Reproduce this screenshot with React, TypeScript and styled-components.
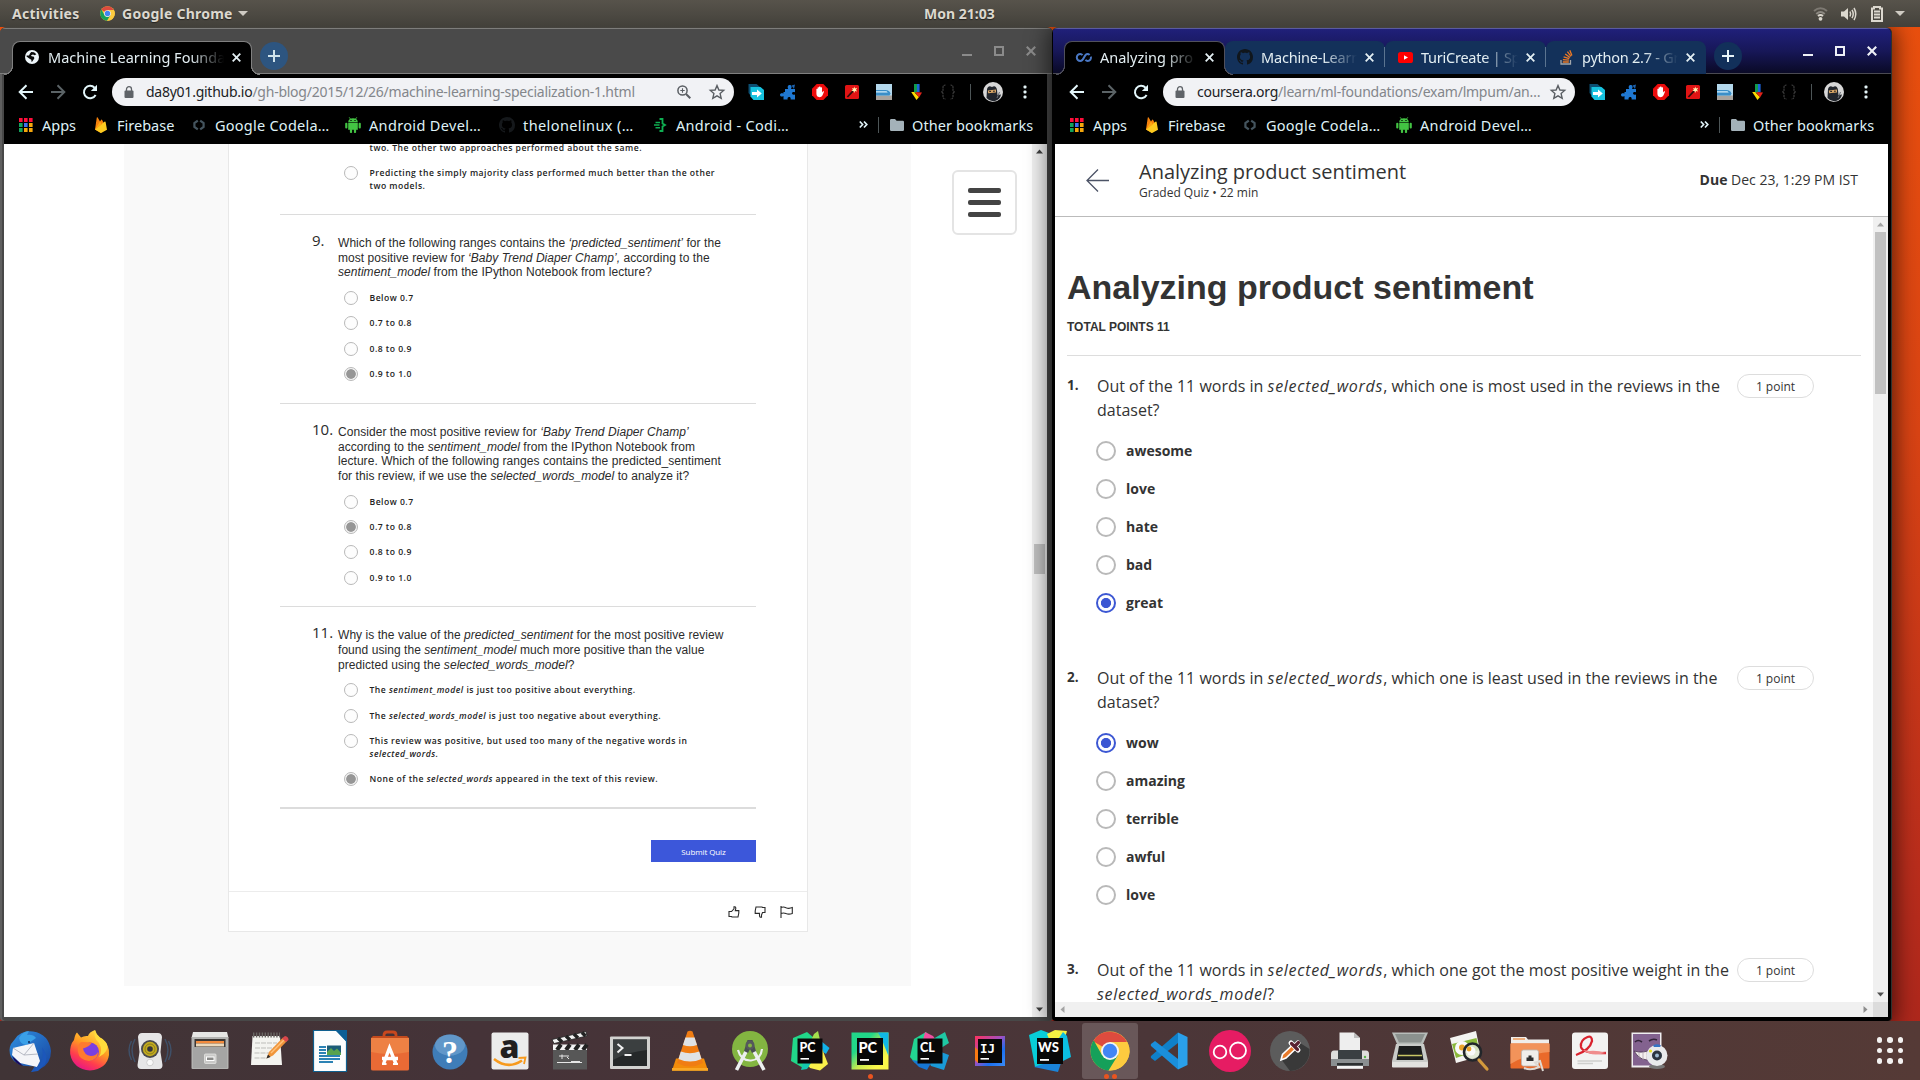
import React from 'react';
import styled, { createGlobalStyle, css } from 'styled-components';

const UI = `"Noto Sans", "Open Sans", sans-serif`;
const OPEN = `"Open Sans", "Noto Sans", sans-serif`;
const ARIAL = `"Liberation Sans", Arial, sans-serif`;

const GlobalStyle = createGlobalStyle`
  *, *::before, *::after { box-sizing: border-box; }
  html, body { margin: 0; padding: 0; }
  body { width: 1920px; height: 1080px; overflow: hidden; background: #000; }
  svg { display: block; flex: none; overflow: visible; }
`;

/* ---------- desktop shell ---------- */

const Desktop = styled.div`
  width: 1920px;
  height: 1080px;
  display: flex;
  flex-direction: column;
  overflow: hidden;
  background: linear-gradient(180deg, #ea500e 0%, #d84314 40%, #b92d1c 80%, #a9251c 100%);
`;

const TopBar = styled.header`
  height: 27px;
  flex: none;
  display: grid;
  grid-template-columns: 1fr auto 1fr;
  align-items: center;
  padding: 0 15px 0 12px;
  background: linear-gradient(180deg, #57534b 0%, #4c4942 55%, #42403a 100%);
  color: #dcd8cf;
  font: 700 14px/27px ${UI};
  position: relative;
  z-index: 3;
`;

const BarSide = styled.div<{ $end?: boolean }>`
  display: flex;
  align-items: center;
  height: 27px;
  justify-content: ${p => (p.$end ? 'flex-end' : 'flex-start')};
`;

const BarText = styled.span<{ $w: number; $ls?: number }>`
  width: ${p => p.$w}px;
  letter-spacing: ${p => p.$ls ?? 0}px;
  white-space: nowrap;
  text-shadow: 0 1px 1px rgba(0, 0, 0, 0.5);
`;

const Gap = styled.span<{ $w: number }>`
  width: ${p => p.$w}px;
  flex: none;
`;

const Workspace = styled.main`
  height: 994px;
  flex: none;
  display: flex;
`;

const Window = styled.section<{ $focused?: boolean }>`
  position: relative;
  z-index: ${p => (p.$focused ? 2 : 1)};
  display: flex;
  flex-direction: column;
  height: 994px;
  border-top: 1px solid #45433e;
  border-radius: 6px 6px 4px 4px;
  overflow: hidden;
  ${p =>
    p.$focused
      ? css`
          width: 840px;
          margin-left: -1px;
          padding: 0 3px 3px 3px;
          background: #000;
          border-right: 1px solid #2b3230;
          box-shadow: 0 2px 22px 3px rgba(0, 0, 0, 0.6);
        `
      : css`
          width: 1053px;
          padding: 0 6px 4px 4px;
          background: #484848;
          box-shadow: inset 2px 0 0 #5f5f5f, inset -1px 0 0 #555;
        `}
`;

const TabStrip = styled.div<{ $focused?: boolean }>`
  height: 46px;
  flex: none;
  display: flex;
  padding-top: 12px;
  margin: 0 ${p => (p.$focused ? '-3px 0 -2px' : '-6px 0 -4px')};
  padding-left: ${p => (p.$focused ? 11 : 12)}px;
  border-top: 1px solid ${p => (p.$focused ? '#5a5aa0' : '#7d7d7b')};
  border-bottom: 1px solid ${p => (p.$focused ? '#4a4a52' : '#808080')};
  background: ${p => (p.$focused ? 'linear-gradient(180deg, #20207a 0%, #171758 50%, #0a0a26 100%)' : '#4a4a4a')};
`;

const Tab = styled.div<{ $w: number; $active?: boolean; $line: string; $divider?: boolean }>`
  position: relative;
  width: ${p => p.$w}px;
  height: ${p => (p.$active ? 34 : 33)}px;
  flex: none;
  display: flex;
  align-items: center;
  padding: 0 7px 1px 11px;
  border-radius: 8px 8px 0 0;
  background: ${p => (p.$active ? '#000' : '#13315a')};
  color: #e3eef2;
  z-index: ${p => (p.$active ? 2 : 1)};
  ${p =>
    p.$active &&
    css`
      border: 1px solid ${p.$line};
      border-bottom: none;
      padding: 0 6px 3px 10px;
      &::before,
      &::after {
        content: '';
        position: absolute;
        bottom: 0;
        width: 9px;
        height: 9px;
      }
      &::before {
        left: -9px;
        background: radial-gradient(circle at 0 0, transparent 7.6px, ${p.$line} 8px 8.8px, #000 9.2px);
      }
      &::after {
        right: -9px;
        background: radial-gradient(circle at 100% 0, transparent 7.6px, ${p.$line} 8px 8.8px, #000 9.2px);
      }
    `}
  ${p =>
    p.$divider &&
    css`
      &::after {
        content: '';
        position: absolute;
        right: 0;
        top: 6px;
        width: 1px;
        height: 20px;
        background: #5b7490;
      }
    `}
`;

const TabTitle = styled.span<{ $ls?: number }>`
  flex: 1;
  min-width: 0;
  margin: 0 3px 0 7px;
  overflow: hidden;
  white-space: nowrap;
  font: 400 14.5px/22px ${UI};
  letter-spacing: ${p => p.$ls ?? 0}px;
  mask-image: linear-gradient(90deg, #000 calc(100% - 34px), transparent 100%);
`;

const IconSlot = styled.span<{ $w?: number }>`
  width: ${p => p.$w ?? 18}px;
  flex: none;
  display: flex;
  align-items: center;
  justify-content: center;
`;

const NewTab = styled.div<{ $color: string }>`
  width: 28px;
  height: 28px;
  margin: 1px 0 0 8px;
  border-radius: 50%;
  display: flex;
  align-items: center;
  justify-content: center;
  background: ${p => p.$color};
`;

const Controls = styled.div<{ $color: string }>`
  margin: -1px 0 0 auto;
  height: 22px;
  display: flex;
  align-items: center;
  gap: 22px;
  padding-right: ${p => (p.$color === '#8b8b8b' ? 17 : 14)}px;
  color: ${p => p.$color};
`;

const Toolbar = styled.div`
  height: 36px;
  flex: none;
  display: flex;
  align-items: center;
  padding: 0 6px;
  background: #000;
  color: #e3f3f6;
`;

const Omnibox = styled.div`
  flex: 1;
  min-width: 0;
  height: 28px;
  margin: 0 6px;
  display: flex;
  align-items: center;
  border-radius: 14px;
  background: #f1f2f5;
  color: #5f6368;
`;

const Url = styled.span<{ $ls: number }>`
  flex: 1;
  min-width: 0;
  white-space: nowrap;
  font: 400 14px/26px ${UI};
  letter-spacing: ${p => p.$ls}px;
  color: #83868b;
  b {
    font-weight: 400;
    color: #202124;
  }
`;

const VLine = styled.span<{ $h: number }>`
  width: 1px;
  height: ${p => p.$h}px;
  background: #4d5557;
  flex: none;
`;

const BookmarkBar = styled.div`
  height: 34px;
  flex: none;
  display: flex;
  align-items: center;
  padding: 0 0 5px 14px;
  background: #000;
  color: #dff1f6;
  font: 400 14.5px/22px ${UI};
`;

const Bookmark = styled.div<{ $w: number; $ls?: number }>`
  width: ${p => p.$w}px;
  flex: none;
  display: flex;
  align-items: center;
  gap: 8px;
  white-space: nowrap;
  letter-spacing: ${p => p.$ls ?? 0}px;
`;

const BookmarkEnd = styled.div`
  margin-left: auto;
  display: flex;
  align-items: center;
  white-space: nowrap;
`;

const Other = styled.span`
  width: 135px;
  margin-left: 8px;
  letter-spacing: 0.08px;
`;

/* ---------- blog page (left) ---------- */

const Page = styled.div`
  height: 873px;
  display: flex;
  background: #fff;
  overflow: hidden;
  color: #2b2b2b;
`;

const Column = styled.div`
  width: 787px;
  height: 842px;
  margin-left: 120px;
  padding-left: 104px;
  background: #f9f9f9;
`;

const Card = styled.div`
  width: 580px;
  height: 788px;
  border: 1px solid #e8e8e8;
  border-top: none;
  background: #fff;
`;

const CardBody = styled.div`
  height: 748px;
  padding: 0 51px;
  border-bottom: 1px solid #ececec;
`;

const Section = styled.section<{ $h: number; $top: number; $thick?: boolean }>`
  height: ${p => p.$h}px;
  padding-top: ${p => p.$top}px;
  border-bottom: ${p => (p.$thick ? 2 : 1)}px solid #dcdcdc;
  display: flex;
`;

const QNum = styled.span`
  width: 58px;
  flex: none;
  padding-left: 32px;
  font: 400 15px/18px ${OPEN};
  white-space: nowrap;
  margin-top: -5px;
`;

const QMain = styled.div`
  flex: 1;
  min-width: 0;
`;

const QText = styled.p`
  margin: 0 0 12px;
  font: 400 12px/14.67px ${ARIAL};
  letter-spacing: 0.055px;
  white-space: nowrap;
`;

const Choice = styled.div`
  display: flex;
  align-items: flex-start;
  margin-bottom: 12.8px;
  padding-left: 6px;
`;

const ChoiceText = styled.span`
  font: 600 8.6px/12.6px ${OPEN};
  letter-spacing: 0.49px;
  white-space: nowrap;
  color: #222;
`;

const SmallRadio = styled.i<{ $on?: boolean }>`
  width: 14px;
  height: 14px;
  margin: -1px 11.5px -1px 0;
  flex: none;
  border-radius: 50%;
  border: 1px solid #b9b9b9;
  background: ${p => (p.$on ? 'radial-gradient(circle, #969696 0 4.4px, #f4f4f4 5.2px)' : '#fdfdfd')};
`;

const FirstBlock = styled.div`
  margin-top: -2px;
  padding-left: 58px;
`;

const SubmitRow = styled.div`
  display: flex;
  justify-content: flex-end;
  padding-top: 31px;
`;

const Submit = styled.button`
  width: 105px;
  height: 22px;
  padding: 0;
  border: none;
  background: #3c57da;
  color: #fff;
  font: 400 8px/21px ${OPEN};
  letter-spacing: -0.1px;
`;

const CardFooter = styled.div`
  height: 39px;
  display: flex;
  align-items: center;
  justify-content: flex-end;
  gap: 14px;
  padding-right: 14px;
  color: #2b2b2b;
`;

const MenuArea = styled.div`
  flex: 1;
  padding: 26px 0 0 41px;
`;

const MenuButton = styled.div`
  width: 65px;
  height: 65px;
  border: 2px solid #e4e4e4;
  border-radius: 6px;
  display: flex;
  flex-direction: column;
  align-items: center;
  justify-content: center;
  gap: 7px;
  i {
    width: 33px;
    height: 5px;
    border-radius: 2px;
    background: #444;
  }
`;

const Scroll = styled.div`
  width: 15px;
  flex: none;
  display: flex;
  flex-direction: column;
  align-items: center;
  background: #f0f0f0;
`;

const Thumb = styled.i<{ $mt: number; $h: number }>`
  width: 11px;
  height: ${p => p.$h}px;
  margin-top: ${p => p.$mt}px;
  margin-bottom: auto;
  background: #c1c1c1;
`;

const ArrowBox = styled.span`
  height: 15px;
  width: 15px;
  flex: none;
  display: flex;
  align-items: center;
  justify-content: center;
`;

/* ---------- quiz page (right) ---------- */

const Quiz = styled.div`
  height: 873px;
  display: flex;
  flex-direction: column;
  background: #fff;
  color: #333;
  overflow: hidden;
`;

const QuizHeader = styled.div`
  height: 73px;
  flex: none;
  display: flex;
  align-items: center;
  padding: 0 30px 0 31px;
  border-bottom: 1px solid #bbb;
`;

const QuizTitles = styled.div`
  flex: 1;
  margin: -1px 0 0 30px;
`;

const QuizTitle = styled.div`
  font: 400 20px/25px ${OPEN};
`;

const QuizSub = styled.div`
  margin-top: 1px;
  font: 400 12px/16px ${OPEN};
`;

const Due = styled.div`
  font: 400 14px/20px ${OPEN};
  b {
    font-weight: 700;
  }
`;

const QuizBody = styled.div`
  flex: 1;
  min-height: 0;
  display: flex;
`;

const QuizMain = styled.div`
  flex: 1;
  min-width: 0;
  display: flex;
  flex-direction: column;
`;

const QuizContent = styled.div`
  flex: 1;
  min-height: 0;
  overflow: hidden;
  padding: 0 12px;
`;

const H1 = styled.h1`
  margin: 0;
  padding-top: 49px;
  font: 700 34px/42px ${ARIAL};
  white-space: nowrap;
`;

const Total = styled.div`
  margin-top: 10px;
  padding-bottom: 19px;
  border-bottom: 1px solid #ddd;
  font: 700 12px/18px ${ARIAL};
`;

const Question = styled.div`
  height: 292px;
  padding-top: 18px;
  display: flex;
  align-items: flex-start;
`;

const QuizNum = styled.b`
  width: 30px;
  flex: none;
  font: 700 13.5px/23px ${OPEN};
`;

const QuizQ = styled.div`
  width: 640px;
  flex: none;
  font: 400 16px/24px ${OPEN};
  white-space: nowrap;
  em {
    letter-spacing: 0.7px;
  }
`;

const Pill = styled.span`
  width: 77px;
  height: 24px;
  border: 1px solid #ddd;
  border-radius: 12px;
  text-align: center;
  font: 400 12px/23px ${OPEN};
`;

const Answers = styled.div`
  margin: 10px 0 0 -1px;
`;

const Answer = styled.div`
  height: 38px;
  display: flex;
  align-items: center;
  gap: 10px;
  font: 700 14px/20px ${OPEN};
`;

const Radio = styled.i<{ $on?: boolean }>`
  width: 20px;
  height: 20px;
  border-radius: 50%;
  border: 2px solid ${p => (p.$on ? '#3c57d3' : '#b9b9b9')};
  background: ${p => (p.$on ? 'radial-gradient(circle, #3c57d3 0 4.7px, transparent 5.4px)' : 'transparent')};
`;

const HScroll = styled.div`
  height: 15px;
  flex: none;
  display: flex;
  justify-content: space-between;
  background: #f0f0f0;
`;

const Corner = styled.i`
  width: 15px;
  height: 15px;
  flex: none;
  background: #dcdcdc;
`;

const Fill = styled.span`
  flex: 1;
`;

/* ---------- dock ---------- */

const Dock = styled.footer`
  flex: 1;
  display: flex;
  align-items: center;
  background: linear-gradient(90deg, #403436 0%, #453338 25%, #4b3638 60%, #553a36 100%);
  position: relative;
  z-index: 3;
`;

const DockItem = styled.div<{ $active?: boolean }>`
  position: relative;
  width: 56px;
  height: 56px;
  margin: 0 2px;
  flex: none;
  display: flex;
  align-items: center;
  justify-content: center;
  border-radius: 3px;
  background: ${p => (p.$active ? 'rgba(255,255,255,0.17)' : 'transparent')};
`;

const Dots = styled.div`
  position: absolute;
  left: 0;
  right: 0;
  bottom: 0;
  display: flex;
  justify-content: center;
  gap: 3px;
  i {
    width: 5px;
    height: 5px;
    border-radius: 50%;
    background: #e95420;
  }
`;

const AppsGrid = styled.div`
  margin: 0 17px 0 auto;
  display: grid;
  grid-template-columns: repeat(3, 5.5px);
  gap: 5px;
  i {
    width: 5.5px;
    height: 5.5px;
    border-radius: 50%;
    background: #f4f2f1;
  }
`;

/* ---------- small glyphs ---------- */

const ChromeLogo = ({ s }: { s: number }) => (
  <svg width={s} height={s} viewBox="0 0 40 40">
    <circle cx="20" cy="20" r="19.5" fill="#fbc83a" />
    <path d="M20 20 L3.1 10.2 A19.5 19.5 0 0 1 36.9 10.9 L20 10.9 Z" fill="#dd4b3e" />
    <path d="M20 20 L20 11 L37.3 11 A19.5 19.5 0 0 1 18.5 39.4 L27.8 24.5 Z" fill="#fdcb3f" />
    <path d="M3.1 10.2 A19.5 19.5 0 0 0 18.5 39.4 L27.8 24.5 L20 20 L12.2 24.5 L3.8 9.6 Z" fill="#15a05a" />
    <circle cx="20" cy="20" r="9" fill="#f4f4f4" />
    <circle cx="20" cy="20" r="7.2" fill="#4285f4" />
  </svg>
);

const Cross = ({ s = 9, w = 1.8 }: { s?: number; w?: number }) => (
  <svg width={s} height={s} viewBox="0 0 9 9" stroke="currentColor" strokeWidth={w}>
    <path d="M0.7 0.7 L8.3 8.3 M8.3 0.7 L0.7 8.3" />
  </svg>
);

const Plus = ({ c = '#cfe3ec' }: { c?: string }) => (
  <svg width="12" height="12" viewBox="0 0 12 12" stroke={c} strokeWidth="2">
    <path d="M6 0 V12 M0 6 H12" />
  </svg>
);

const WinControls = ({ color }: { color: string }) => (
  <Controls $color={color}>
    <svg width="10" height="10" viewBox="0 0 10 10"><path d="M0 9 H10" stroke="currentColor" strokeWidth="2" /></svg>
    <svg width="10" height="10" viewBox="0 0 10 10"><path d="M1 1 H9 V9 H1 Z" stroke="currentColor" strokeWidth="2" fill="none" /></svg>
    <Cross s={10} w={1.9} />
  </Controls>
);

const Back = () => (
  <svg width="16" height="16" viewBox="0 0 16 16" stroke="#e3f6fa" strokeWidth="2" fill="none">
    <path d="M15 8 H2 M8.5 1.2 L1.7 8 L8.5 14.8" />
  </svg>
);
const Forward = () => (
  <svg width="16" height="16" viewBox="0 0 16 16" stroke="#5b6366" strokeWidth="2" fill="none">
    <path d="M1 8 H14 M7.5 1.2 L14.3 8 L7.5 14.8" />
  </svg>
);
const Reload = () => (
  <svg width="16" height="16" viewBox="0 0 16 16" fill="none">
    <path d="M13.6 11 A6.2 6.2 0 1 1 12.6 3.7" stroke="#e3f6fa" strokeWidth="2" />
    <path d="M15 0.8 V7 H8.8 Z" fill="#e3f6fa" />
  </svg>
);
const Lock = () => (
  <svg width="10" height="13" viewBox="0 0 10 13">
    <rect x="0.5" y="4.5" width="9" height="7.5" rx="1" fill="#5f6368" />
    <path d="M2.5 5 V3.2 A2.5 2.5 0 0 1 7.5 3.2 V5" stroke="#5f6368" strokeWidth="1.3" fill="none" />
  </svg>
);
const Star = () => (
  <svg width="16" height="16" viewBox="0 0 16 16" fill="none" stroke="#5a5e63" strokeWidth="1.4">
    <path d="M8 1.6 L9.9 6 L14.7 6.4 L11.1 9.6 L12.2 14.3 L8 11.8 L3.8 14.3 L4.9 9.6 L1.3 6.4 L6.1 6 Z" />
  </svg>
);
const ZoomGlass = () => (
  <svg width="14" height="14" viewBox="0 0 14 14" fill="none" stroke="#5a5e63">
    <circle cx="5.5" cy="5.5" r="4.6" strokeWidth="1.5" />
    <path d="M9 9 L13.3 13.3" strokeWidth="2" />
    <path d="M5.5 3.3 V7.7 M3.3 5.5 H7.7" strokeWidth="1.1" />
  </svg>
);

const ExtShare = () => (
  <svg width="16" height="16" viewBox="0 0 16 16">
    <path d="M0.5 0 H8.5 L12 3 V12 H3 L0.5 9 Z" fill="#0b4f73" />
    <path d="M2.5 3 H12.500 L16 6 V16 H5.500 L2.5 12.5 Z" fill="#17c3e0" />
    <path d="M4 8 H9 V5.4 L13.8 9.5 L9 13.4 V11 H4 Z" fill="#fff" />
  </svg>
);
const ExtPuzzle = () => (
  <svg width="16" height="16" viewBox="0 0 16 16">
    <path d="M5 5 H8.2 C7 2.5 8.2 1 9.8 1 C11.6 1 12.2 2.8 11 5 H15 V8.3 C13 7.3 12 8.3 12 9.3 C12 10.5 13.3 11.3 15 10.4 V15.5 H10.6 C11 13.6 10 13 9 13 C7.8 13 7.2 14 7.7 15.5 H3.5 V12 C1.5 13.2 0 12.3 0 10.8 C0 9.4 1.6 8.6 3.5 9.6 V8 H5 Z" fill="#1f78d2" />
    <path d="M11.5 1.5 L15 0.5 L14 5" fill="#1d62ad" />
  </svg>
);
const ExtHand = () => (
  <svg width="16" height="16" viewBox="0 0 16 16">
    <path d="M4.7 0 H11.3 L16 4.7 V11.3 L11.3 16 H4.7 L0 11.3 V4.7 Z" fill="#ec0b0b" />
    <path d="M4.4 7 V5 Q5 4.3 5.6 5 V7 V3.6 Q6.3 2.8 7 3.6 V6.6 V2.8 Q7.8 2 8.5 2.8 V6.6 V3.6 Q9.3 2.8 10 3.6 V8.6 L11 7.3 Q12 6.8 12 7.8 L10.4 11.6 Q9.6 13.3 7.4 13.3 Q4.4 13 4.4 9.6 Z" fill="#fff" />
  </svg>
);
const ExtWand = () => (
  <svg width="14" height="14" viewBox="0 0 14 14">
    <rect width="14" height="14" rx="1.500" fill="#e01414" />
    <path d="M2.4 12 L8.4 5.6" stroke="#2c0b0b" strokeWidth="1.7" />
    <path d="M9.200 1.400 L10 3.500 L12.200 2.800 L11 4.700 L12.200 6.500 L10 5.900 L9.200 8 L8.400 5.900 L6.400 5.900 L7.900 4.700 L7 3 L8.700 3.500 Z" fill="#fff0b0" />
  </svg>
);
const ExtTrain = () => (
  <svg width="16" height="16" viewBox="0 0 16 16">
    <rect width="16" height="16" fill="#b4d8ec" />
    <rect y="11.500" width="16" height="4.500" fill="#a9a49f" />
    <path d="M0 6 H9.500 Q13.500 6.300 14.500 9.500 L13.500 11.500 H0 Z" fill="#3b8fc9" />
    <path d="M0 7.200 H10.500 L11.800 8.600 H0 Z" fill="#d7f0fb" />
  </svg>
);
const ExtArrow = () => (
  <svg width="11" height="16" viewBox="0 0 11 16">
    <rect x="3" y="0" width="3" height="9" fill="#109a4c" />
    <rect x="6" y="0" width="2.6" height="8" fill="#1c63d8" />
    <path d="M0.2 8 L3 8 L8 13 L5.5 16 Z" fill="#ffd900" />
    <path d="M4 8 L11 8.5 L8 13.4 Z" fill="#e2231a" />
  </svg>
);
const ExtBraces = () => (
  <svg width="16" height="16" viewBox="0 0 16 16" stroke="#3c3c3c" strokeWidth="1.2" fill="none" strokeDasharray="2 0.6">
    <path d="M5.5 1 Q3 1 3 3.5 V6 Q3 8 1 8 Q3 8 3 10 V12.5 Q3 15 5.5 15" />
    <path d="M10.5 1 Q13 1 13 3.5 V6 Q13 8 15 8 Q13 8 13 10 V12.5 Q13 15 10.5 15" />
  </svg>
);
const Avatar = () => (
  <svg width="20" height="20" viewBox="0 0 20 20">
    <circle cx="10" cy="10" r="10" fill="#d7d7d7" />
    <path d="M4 7 Q5 3 9 5 Q13 2.8 14 8 L14.5 13 L18 12.5 Q17 17.5 12 19 Q7 20 3.5 16 Z" fill="#22262d" />
    <path d="M4.8 8.6 L13 7.6 V10.6 L5.2 11.2 Z" fill="#d7a566" />
    <path d="M6.2 9.4 H8 M10 9.2 H11.8" stroke="#1b1b1b" strokeWidth="1" />
    <path d="M16.5 10 L14 16" stroke="#6b6f75" strokeWidth="1" />
  </svg>
);
const Kebab = () => (
  <svg width="4" height="14" viewBox="0 0 4 14" fill="#e3f3f6">
    <rect x="0.5" y="0.5" width="3" height="3" rx="1" />
    <rect x="0.5" y="5.5" width="3" height="3" rx="1" />
    <rect x="0.5" y="10.5" width="3" height="3" rx="1" />
  </svg>
);

const gridColors = ['#ff0e3a', '#ff0e3a', '#ff0e3a', '#12a35c', '#3f6ff0', '#f5a70c', '#12a35c', '#f5a70c', '#f5a70c'];
const AppsIcon = () => (
  <svg width="14" height="14" viewBox="0 0 14 14">
    {gridColors.map((c, i) => (
      <rect key={i} x={(i % 3) * 5} y={Math.floor(i / 3) * 5} width="3.6" height="4" fill={c} />
    ))}
  </svg>
);
const FirebaseIcon = () => (
  <svg width="12" height="16" viewBox="0 0 12 16">
    <path d="M0 12.5 L1.8 0.6 Q2.2 0 2.7 0.6 L5 4.6 L6.2 2.8 Q6.6 2.2 7 2.8 L9 6.5 L6 16 Z" fill="#f6820c" />
    <path d="M0 12.5 L9.8 4.5 Q10.5 4.3 10.6 5 L12 12.8 L6.6 15.8 Q6 16.1 5.4 15.8 Z" fill="#fdca1f" />
    <path d="M0 12.5 L5 4.6 L6.8 7.4 Z" fill="#ffa713" />
  </svg>
);
const CodeIcon = () => (
  <svg width="12" height="10" viewBox="0 0 12 10" stroke="#44545e" strokeWidth="2.2" fill="none">
    <path d="M4.8 0.6 L1.4 3 V7 L4.8 9.4 M7.2 0.6 L10.6 3 V7 L7.2 9.4" />
  </svg>
);
const AndroidIcon = () => (
  <svg width="16" height="16" viewBox="0 0 16 16" fill="#43c443">
    <path d="M3.2 5.2 Q3.4 1.4 8 1.2 Q12.6 1.4 12.8 5.2 Z" />
    <path d="M4.2 0.3 L5.6 2.2 M11.8 0.3 L10.4 2.2" stroke="#43c443" strokeWidth="0.9" />
    <rect x="3.2" y="5.8" width="9.6" height="7" />
    <rect x="0.2" y="5.8" width="2.2" height="5.6" rx="1" />
    <rect x="13.6" y="5.8" width="2.2" height="5.6" rx="1" />
    <rect x="4.9" y="12" width="2.2" height="4" rx="0.8" />
    <rect x="8.9" y="12" width="2.2" height="4" rx="0.8" />
    <rect x="5.4" y="3" width="1.2" height="1" fill="#000" />
    <rect x="9.4" y="3" width="1.2" height="1" fill="#000" />
  </svg>
);
const Octocat = ({ c }: { c: string }) => (
  <svg width="16" height="16" viewBox="0 0 16 16" fill={c}>
    <path d="M8 0C3.58 0 0 3.58 0 8c0 3.54 2.29 6.53 5.47 7.59.4.07.55-.17.55-.38 0-.19-.01-.82-.01-1.49-2.01.37-2.53-.49-2.69-.94-.09-.23-.48-.94-.82-1.13-.28-.15-.68-.52-.01-.53.63-.01 1.08.58 1.23.82.72 1.21 1.87.87 2.33.66.07-.52.28-.87.51-1.07-1.78-.2-3.64-.89-3.64-3.95 0-.87.31-1.59.82-2.15-.08-.2-.36-1.02.08-2.12 0 0 .67-.21 2.2.82.64-.18 1.32-.27 2-.27s1.36.09 2 .27c1.53-1.04 2.2-.82 2.2-.82.44 1.1.16 1.92.08 2.12.51.56.82 1.27.82 2.15 0 3.07-1.87 3.75-3.65 3.95.29.25.54.73.54 1.48 0 1.07-.01 1.93-.01 2.2 0 .21.15.46.55.38A8.01 8.01 0 0 0 16 8c0-4.42-3.58-8-8-8z" />
  </svg>
);
const CodingIcon = () => (
  <svg width="12" height="14" viewBox="0 0 12 14" stroke="#0fae52" strokeWidth="1.8" fill="none">
    <path d="M5.5 1 H8.5 V5.5 L11 7 L8.5 8.5 V13 H5.5" />
    <path d="M1.5 4.5 H6 M0 7 H5.5 M1.5 9.8 H6" strokeWidth="1.5" />
  </svg>
);
const FolderIcon = () => (
  <svg width="14" height="12" viewBox="0 0 14 12">
    <path d="M0 1.2 Q0 0 1.2 0 H5 L6.6 1.7 H12.8 Q14 1.7 14 2.9 V10.8 Q14 12 12.8 12 H1.2 Q0 12 0 10.8 Z" fill="#a4b2b9" />
  </svg>
);
const Chevrons = () => (
  <svg width="9" height="7" viewBox="0 0 9 7" stroke="#dff1f6" strokeWidth="1.7" fill="none">
    <path d="M0.8 0.5 L3.6 3.5 L0.8 6.5 M5 0.5 L7.8 3.5 L5 6.5" />
  </svg>
);
const Globe = () => (
  <svg width="14" height="14" viewBox="0 0 14 14">
    <circle cx="7" cy="7" r="7" fill="#eef6fa" />
    <path d="M6.200 2 L9 2.200 L11.400 4.200 L9.600 5.200 L8 4.400 L6 5.200 L6.600 6.200 L9 6.800 L9.300 8.600 L7.600 11 L6.700 12.300 L6.300 9.800 L4.200 8.400 L1.500 6.400 L1.700 5.600 L4 5.600 L5 3.400 Z" fill="#0a0a0a" />
  </svg>
);
const Coursera = () => (
  <svg width="16" height="9" viewBox="0 0 16 9" fill="none" stroke="#4a78c4" strokeWidth="2">
    <path d="M13.600 2 Q12.800 1 11.400 1 Q9.600 1 8 4.500 Q6.400 8 4.300 8 A3.400 3.400 0 0 1 4.300 1 Q5.600 1 6.500 2.200 M9.500 6.800 Q10.300 8 11.700 8 A3.300 3.300 0 0 0 14.800 3.600" />
  </svg>
);
const YouTube = () => (
  <svg width="15" height="11" viewBox="0 0 15 11">
    <rect width="15" height="11" rx="2.6" fill="#f00" />
    <path d="M6 3.2 L10 5.5 L6 7.8 Z" fill="#fff" />
  </svg>
);
const StackIcon = () => (
  <svg width="13" height="15" viewBox="0 0 13 15" fill="none" strokeWidth="1.3">
    <path d="M1 10 V14 H10.5 V10" stroke="#a3a6ab" />
    <path d="M2.8 12 H8.8 M2.9 9.6 L8.9 10.2 M3.6 6.8 L9.3 8.7 M5.2 4 L10 7.6 M7.4 1.6 L11 6.4 M9.8 0.2 L11.9 5.6" stroke="#ee7a25" />
  </svg>
);

const Tri = ({ dir = 'up', c = '#8d8d8d' }: { dir?: 'up' | 'down' | 'left' | 'right'; c?: string }) => {
  const d = {
    up: 'M0 5.5 L3.5 1.5 L7 5.5 Z',
    down: 'M0 1.5 L3.5 5.5 L7 1.5 Z',
    left: 'M5.5 0 L1.5 3.5 L5.5 7 Z',
    right: 'M1.5 0 L5.5 3.5 L1.5 7 Z',
  }[dir];
  return (
    <svg width="7" height="7" viewBox="0 0 7 7">
      <path d={d} fill={c} />
    </svg>
  );
};

/* ---------- dock artwork ---------- */

const Art = ({ children }: { children: React.ReactNode }) => (
  <svg width="42" height="42" viewBox="0 0 42 42">{children}</svg>
);

const Mono = ({ x, y, s, children }: { x: number; y: number; s: number; children: string }) => (
  <text x={x} y={y} fontFamily="Lato, sans-serif" fontWeight="900" fontSize={s} fill="#fff">{children}</text>
);

const dockArt: Record<string, React.ReactNode> = {
  thunderbird: (
    <Art>
      <defs>
        <linearGradient id="tb" x1="0" y1="0" x2="1" y2="1">
          <stop offset="0" stopColor="#2f8fe0" />
          <stop offset="1" stopColor="#17439f" />
        </linearGradient>
      </defs>
      <path d="M2 14 L6 9 Q12 0 24 1.5 Q40 4 42 21 Q42 34 31 39 L22 42 L26 36 Q8 38 2 27 Q-1 20 2 14 Z" fill="url(#tb)" />
      <path d="M10 8 Q14 1 20 1 L18 5 Q24 4 27 8 L17 15 Q11 14 10 8 Z" fill="#3aa0e8" />
      <path d="M4 18 L25 13 L31 31 L28 37 L11 33 L3 25 Z" fill="#f4f5f8" />
      <path d="M4 18 L15 25 L25 13 M15 25 L29 24" stroke="#b6bac4" strokeWidth="1" fill="none" />
      <path d="M3 26 L11 33 L14 36 Q6 34 3 26 Z" fill="#190a5c" />
      <path d="M28 37 Q36 31 33 17 Q40 26 36 34 L29 41 L22 42 Z" fill="#1c57ba" />
      <circle cx="20" cy="12" r="1" fill="#0b2452" />
    </Art>
  ),
  firefox: (
    <Art>
      <defs>
        <linearGradient id="ff" x1="0.8" y1="0" x2="0.3" y2="1">
          <stop offset="0" stopColor="#ffe64a" />
          <stop offset="0.45" stopColor="#ff9a22" />
          <stop offset="0.75" stopColor="#ff3d4e" />
          <stop offset="1" stopColor="#e5148a" />
        </linearGradient>
      </defs>
      <path d="M5 10 Q6 4 8 2.5 L12 7.5 Q15 5.5 19 6 Q20 2 26 0 Q27 6 33 9 Q41 15 40 25 Q38 39 21 40.5 Q4 39 1.2 24 Q0.5 15 5 10 Z" fill="url(#ff)" />
      <circle cx="21" cy="21.5" r="9" fill="#7a3fe0" />
      <path d="M12 12 L23 12.5 Q20 17 14 18.5 Q15 25 22 26 Q27 26 29 22 Q29 30 20 31 Q10 30 9 22 Q8 15 12 12 Z" fill="#ff7a2e" />
      <path d="M26 0 Q24 8 30 13 Q34 20 30 27 Q40 22 38 14 Q35 9 31 7.5 Q27 4 26 0 Z" fill="#ffdc3c" />
    </Art>
  ),
  speaker: (
    <Art>
      <path d="M6 9 Q0 20 6 32 M2.500 11 Q-2.500 20 2.500 30 M36 9 Q42 20 36 32 M39.500 11 Q44.500 20 39.500 30" stroke="#3f5068" strokeWidth="1.500" fill="none" />
      <path d="M13 3 H29 Q32.500 3 33 7 L31.500 22 L33.500 35 Q33.500 39 30 39 H12 Q8.500 39 8.500 35 L10.500 22 L9 7 Q9.500 3 13 3 Z" fill="#e6e6e7" />
      <circle cx="21" cy="19" r="9" fill="#4a4a4d" />
      <circle cx="21" cy="19" r="7.200" fill="#c2ab1e" />
      <circle cx="21" cy="19" r="5" fill="none" stroke="#7d7120" strokeWidth="0.800" />
      <circle cx="21" cy="19" r="2.800" fill="#34343a" />
      <circle cx="21" cy="32.5" r="3.300" fill="#f9f9f9" stroke="#c6c6c6" strokeWidth="0.8" />
    </Art>
  ),
  files: (
    <Art>
      <path d="M4 2 H38 L39.500 8 H2.5 Z" fill="#e6e6e4" />
      <rect x="2.500" y="7" width="37" height="32" rx="1" fill="#b3b3b1" />
      <rect x="5.5" y="9" width="31" height="8" fill="#3c3734" />
      <rect x="7" y="11" width="28" height="2.500" fill="#f28a3c" />
      <rect x="7" y="13.5" width="28" height="3" fill="#ecd9bb" />
      <rect x="4" y="17" width="34" height="21" fill="#a5a5a4" />
      <rect x="15.5" y="24" width="11.5" height="9.5" rx="1" fill="#c9c9c7" stroke="#e4e4e2" strokeWidth="0.8" />
      <rect x="17.5" y="27" width="7.5" height="3.500" fill="#8a8a88" stroke="#fff" strokeWidth="1" />
    </Art>
  ),
  notes: (
    <Art>
      <path d="M3.5 6 H31 L33 35 H2 Z" fill="#f4f4f0" />
      <path d="M4 5 H31" stroke="#6a6763" strokeWidth="5" strokeDasharray="1.4 1.500" />
      <path d="M6 13 H28 M6 18 H26 M5.500 23 H22 M5.500 28 H18" stroke="#bdbdb9" strokeWidth="1" strokeDasharray="5 1" />
      <path d="M17.500 28.500 L20 22 L34 7.500 L38 11 L24 25.500 Z" fill="#f0953a" />
      <path d="M22 23 L36 9" stroke="#ffc27b" strokeWidth="1.400" />
      <path d="M33 8.500 L36 6 Q39.500 6.500 39.500 10 L37 12 Z" fill="#d9474c" />
      <path d="M17.500 28.500 L19 24.500 L21.500 27 Z" fill="#2b2b2b" />
    </Art>
  ),
  writer: (
    <Art>
      <path d="M4.500 0.500 H28 L37.500 11 V41.500 H4.500 Z" fill="#fcfdfd" stroke="#0f5f8e" strokeWidth="1.200" />
      <path d="M26 0 H38 V12 Z" fill="#0c5f96" />
      <path d="M10 17 H17 M10 20 H17 M10 23 H17 M10 26 H31 M10 29 H31 M10 32 H24" stroke="#2b82b4" strokeWidth="1.800" />
      <rect x="18" y="15.500" width="14" height="9.500" fill="#1b5d78" />
      <path d="M18 22 L22 18 L25 21 L28 18.500 L32 23 V25 H18 Z" fill="#58a34e" />
    </Art>
  ),
  software: (
    <Art>
      <path d="M15 11 V5 Q15 2 18 2 H24 Q27 2 27 5 V11" stroke="#c8481e" strokeWidth="2.800" fill="none" />
      <path d="M2 8 H40 V39 Q40 40.500 38 40.500 H4 Q2 40.500 2 39 Z" fill="#e96a35" />
      <path d="M2 8 H40 L38 6 H4 Z" fill="#c24a1d" />
      <path d="M2 8 H40 V22 Q20 26 2 22 Z" fill="#ee8144" />
      <path d="M14.500 34 L20.500 18 L27 34 M13 28.500 H29" stroke="#fff" strokeWidth="3.400" fill="none" />
      <path d="M13 34 H17.500 M24 34 H29" stroke="#fff" strokeWidth="2" />
    </Art>
  ),
  help: (
    <Art>
      <circle cx="21" cy="22" r="17.500" fill="#3f7db8" />
      <ellipse cx="21" cy="15" rx="15" ry="10.500" fill="#78a9d4" opacity="0.600" />
      <text x="21" y="33" textAnchor="middle" fontFamily="Liberation Serif, serif" fontWeight="700" fontSize="32" fill="#fff">?</text>
    </Art>
  ),
  amazon: (
    <Art>
      <rect x="2.500" y="2.500" width="37" height="37" rx="2" fill="#ececec" />
      <text x="20.500" y="28" textAnchor="middle" fontFamily="Open Sans, sans-serif" fontWeight="800" fontSize="32" fill="#221f1f">a</text>
      <path d="M5 29 Q19 40 33 30.500" stroke="#f79a1e" strokeWidth="2.600" fill="none" />
      <path d="M29.500 28 L36.500 27.500 L35 34" stroke="#f79a1e" strokeWidth="1.800" fill="none" />
    </Art>
  ),
  clapper: (
    <Art>
      <path d="M3 9.500 L37 1.500 L38 6 L5 13.500 Z" fill="#f2f2f2" stroke="#222" strokeWidth="0.800" />
      <path d="M9 8 L13 12 M17 6 L21 10 M25 4 L29 8 M33 2.500 L36.500 6" stroke="#222" strokeWidth="3.500" />
      <rect x="4" y="14.500" width="34" height="5.500" fill="#f2f2f2" />
      <path d="M8 20 L12 14.500 M17 20 L21 14.500 M26 20 L30 14.500 M34 20 L38 14.500" stroke="#222" strokeWidth="4" />
      <rect x="4" y="20" width="34" height="19.500" fill="#575757" />
      <path d="M8 32.500 H33 M10 26 H20 M13 24.500 V29 M18 27 L20 29 M22 31.500 H31" stroke="#e6e6e6" strokeWidth="1" />
    </Art>
  ),
  terminal: (
    <Art>
      <rect x="1" y="6.500" width="40" height="32.500" rx="1" fill="#d2d2d0" />
      <rect x="4" y="9.500" width="34" height="26.500" fill="#252829" />
      <path d="M4 9.500 H38 V20 Q18 22 4 30 Z" fill="#3b3f40" />
      <path d="M8.500 14 L13.500 18 L8.500 22.500 M15.500 25 H22.500" stroke="#f2f2f2" strokeWidth="2" fill="none" />
    </Art>
  ),
  vlc: (
    <Art>
      <path d="M7 28.500 H35 L39 40.500 H3 Z" fill="#f28c0a" />
      <path d="M18.500 1.500 Q21 0 23.500 1.500 L34 33 Q21 40 8 33 Z" fill="#f07d13" />
      <path d="M16.400 7.500 H25.600 L28 15 Q21 17.500 14 15 Z" fill="#dfe3e6" />
      <path d="M11.800 21.500 Q21 25 30.200 21.500 L32.500 29 Q21 34 9.500 29 Z" fill="#dfe3e6" />
      <path d="M3 38 H39 V40.800 H3 Z" fill="#f9a825" />
    </Art>
  ),
  androidstudio: (
    <Art>
      <circle cx="21" cy="19" r="18" fill="#83b541" />
      <path d="M21 14 L7.500 40 M21 14 L35 40" stroke="#eceff0" strokeWidth="3.600" />
      <path d="M9 20 Q12 31 22 30.500 Q32 29.500 33 19" stroke="#eceff0" strokeWidth="2.200" fill="none" />
      <path d="M18.500 10 H23.500 L27 21 L23 23 L21 19 L19 23 L15 21 Z" fill="#4a4f52" />
      <circle cx="21" cy="15" r="4.500" fill="#55595c" />
      <circle cx="21" cy="15.500" r="2" fill="#83b541" />
    </Art>
  ),
  pycharmce: (
    <Art>
      <path d="M4 8 L18 2 L25 8 V34 L16 39 L2 31 Z" fill="#21d789" />
      <path d="M25 4 L29 1 L31 10 L22 10 Z" fill="#a5e04c" />
      <path d="M32 11 L40.500 18 L37 24 L31 20 Z" fill="#12b1e8" />
      <path d="M32 16 L39 34 L31 40.500 L21 38 L18 33 Z" fill="#f9f04a" />
      <path d="M14 33 H22 L18 39 L12 40 Z" fill="#14c8b0" />
      <rect x="8.500" y="8.500" width="25" height="25" fill="#080808" />
      <Mono x={10.500} y={21.500} s={12.500}>PC</Mono>
      <rect x="11.500" y="28" width="8.500" height="1.600" fill="#fff" />
    </Art>
  ),
  pycharm: (
    <Art>
      <defs>
        <linearGradient id="pc" x1="0" y1="0" x2="1" y2="1">
          <stop offset="0.300" stopColor="#21d789" />
          <stop offset="0.550" stopColor="#c8e84e" />
          <stop offset="0.800" stopColor="#fcf84a" />
        </linearGradient>
      </defs>
      <rect x="2.500" y="2.500" width="37" height="37" fill="url(#pc)" />
      <path d="M29 2.500 H39.500 V26 L33 10 Z" fill="#10b8e6" />
      <rect x="8" y="8" width="26" height="27" fill="#080808" />
      <Mono x={9.500} y={22.500} s={14.500}>PC</Mono>
      <rect x="11" y="29" width="9" height="1.800" fill="#fff" />
    </Art>
  ),
  clion: (
    <Art>
      <path d="M5 9 L17 2 L22 8 L14 34 L6 33 L1 27 Z" fill="#22d492" />
      <path d="M16 2 L24 6 L27 10 L14 10 Z" fill="#ef4fa0" />
      <path d="M24 9 L36 2 L40 13 L32 18 Z" fill="#1fc8a4" />
      <path d="M32 22 L40 25 L35 40 L22 36 L20 32 Z" fill="#1a9bd8" />
      <path d="M3 30 L22 33 L18 40 L10 37 Z" fill="#1676d4" />
      <rect x="8.500" y="8.500" width="25" height="25" fill="#080808" />
      <Mono x={11} y={21.500} s={12.500}>CL</Mono>
      <rect x="11.500" y="28" width="8.500" height="1.600" fill="#fff" />
    </Art>
  ),
  intellij: (
    <Art>
      <defs>
        <linearGradient id="ij" x1="0" y1="0" x2="1" y2="1">
          <stop offset="0" stopColor="#fe315d" />
          <stop offset="0.450" stopColor="#a24fc0" />
          <stop offset="0.700" stopColor="#1b6ff0" />
          <stop offset="1" stopColor="#3b8bf5" />
        </linearGradient>
      </defs>
      <rect x="6" y="6" width="30" height="30" fill="url(#ij)" />
      <path d="M6 17 L9 20 V33 L6 30 Z" fill="#f97a12" />
      <rect x="9" y="9" width="24" height="24" fill="#080808" />
      <text x="11" y="22.500" fontFamily="DejaVu Sans Mono, monospace" fontWeight="700" fontSize="12.500" fill="#fff">IJ</text>
      <rect x="11.500" y="28" width="8.500" height="1.600" fill="#fff" />
    </Art>
  ),
  webstorm: (
    <Art>
      <path d="M0 5 L12 0 L20 3 V35 L6 37 Z" fill="#08cdd8" />
      <path d="M18 4 L26 0 L38 1 L36 8 L20 9 Z" fill="#f4f243" />
      <path d="M34 2 L38 6 L42 27 L34 31 L30 8 Z" fill="#0bbfe2" />
      <path d="M5 37 L20 32 L32 33 L29 42 Z" fill="#1b84d8" />
      <rect x="8" y="8" width="26" height="26" fill="#080808" />
      <Mono x={9} y={21.500} s={13}>WS</Mono>
      <rect x="11" y="29" width="9" height="1.800" fill="#fff" />
    </Art>
  ),
  chrome: <ChromeLogo s={40} />,
  vscode: (
    <Art>
      <path d="M29 2.500 L38.500 7 V35 L29 39.500 Z" fill="#2aa0ea" />
      <path d="M29 2.500 V13 L6 31 L2 28 Q1.500 27 2 26 Z" fill="#0f80c9" />
      <path d="M29 39.500 V29 L6 11 L2 14 Q1.500 15 2 16 Z" fill="#1a8fdc" />
    </Art>
  ),
  oo: (
    <Art>
      <circle cx="21" cy="21" r="21" fill="#e61c63" />
      <circle cx="11" cy="22" r="6.300" fill="none" stroke="#fff" strokeWidth="1.800" />
      <circle cx="29" cy="20.500" r="8" fill="none" stroke="#fff" strokeWidth="1.800" />
    </Art>
  ),
  picker: (
    <Art>
      <circle cx="21" cy="21" r="20" fill="#5c5c5c" />
      <path d="M28 11 L40.500 19 A20 20 0 0 1 21 41 L12 29 Z" fill="#393939" />
      <path d="M12 30 L13.500 24.500 L24 14.500 L27.500 18 L17 28 Z" fill="#e87a2a" stroke="#fff" strokeWidth="1.600" />
      <path d="M22 13 L29 20 M26 16 L29 13" stroke="#fff" strokeWidth="5" strokeLinecap="round" />
      <path d="M22.500 13.500 L28.500 19.500 M26 16 L29.500 12.500" stroke="#5a2230" strokeWidth="3.200" strokeLinecap="round" />
    </Art>
  ),
  printer: (
    <Art>
      <path d="M10.500 2.500 H25 L31 8 V24 H10.500 Z" fill="#eeeeee" />
      <path d="M25 2.500 V8 H31 Z" fill="#bdbdbd" />
      <path d="M2 24 Q2 20.500 5 20.500 H37 Q40 20.500 40 24 V34 H2 Z" fill="#dededc" />
      <rect x="9" y="20" width="24" height="10" fill="#3a3f42" />
      <path d="M2 29 H40 V36 H2 Z" fill="#8b8f91" />
      <rect x="8" y="33" width="26" height="2.500" fill="#2c2f31" />
      <rect x="8" y="36" width="26" height="2.800" fill="#f5f5f5" />
      <circle cx="36" cy="27" r="1.200" fill="#59b548" />
    </Art>
  ),
  scanner: (
    <Art>
      <path d="M3 2.500 H39 L34 14 H8 Z" fill="#b7bcb9" />
      <path d="M6 4 H36 L32 12.500 H10 Z" fill="#8b918e" />
      <path d="M7 14 H35 L39 31 V37 H3 V31 Z" fill="#c9cbc8" />
      <path d="M10 16 H32 L34.500 30 H7.500 Z" fill="#1b1d1d" />
      <path d="M9 25.500 H33" stroke="#c8c766" strokeWidth="1.500" />
      <rect x="3" y="32" width="36" height="5.500" rx="1" fill="#e2e2df" />
    </Art>
  ),
  viewer: (
    <Art>
      <path d="M1 8 L27 1 L32 26 L7 33 Z" fill="#f4f4f1" />
      <path d="M3 14 L27.500 8 L30 20 L7 28 Z" fill="#8ab83a" />
      <circle cx="13" cy="18" r="7" fill="#fafafa" />
      <circle cx="13" cy="17.500" r="3" fill="#e9a32a" />
      <circle cx="23.500" cy="22" r="8.500" fill="rgba(225,232,210,.85)" stroke="#22262a" strokeWidth="2.600" />
      <circle cx="22" cy="21" r="4.500" fill="#fafafa" />
      <circle cx="20" cy="19" r="2.400" fill="#e9a32a" />
      <path d="M30 30 L38 39" stroke="#d39a3c" strokeWidth="3.200" strokeLinecap="round" />
    </Art>
  ),
  netfolder: (
    <Art>
      <path d="M2 7 H17 L19 9.500 H40 V18 H2 Z" fill="#f0eeeb" />
      <path d="M4 9 H16" stroke="#ee9a5a" strokeWidth="1.500" />
      <rect x="1.500" y="13.500" width="39" height="25" rx="1" fill="#ea6a2a" />
      <path d="M1.500 13.500 H40.500 V22 Q18 24 1.500 34 Z" fill="#f2935a" />
      <rect x="12.500" y="20" width="17" height="16" rx="2" fill="#f0eeea" stroke="#bcb8b2" strokeWidth="0.800" />
      <path d="M17.500 31 V27.500 H19.500 V25.500 H22.500 V27.500 H24.500 V31 Z" fill="#2d2d2d" />
      <path d="M15 38 Q22 41 30 37 L26 32.500 L31 31 L34 41" stroke="#dedad4" strokeWidth="2" fill="none" />
    </Art>
  ),
  docview: (
    <Art>
      <rect x="3" y="2.500" width="36" height="36.500" rx="3" fill="#f3f3f2" />
      <path d="M7 25 Q21 20 23 11 Q23 5.500 18.500 7 Q11 10 12 17 Q14 24 37 23" stroke="#d9232e" strokeWidth="2.300" fill="none" />
      <path d="M14 20 Q22 27 37 23 Q28 20 20 21 Z" fill="#f08d8d" />
      <path d="M8.500 31 H33 M8.500 33.500 H24" stroke="#cfcfcd" strokeWidth="1.300" />
    </Art>
  ),
  cheese: (
    <Art>
      <rect x="2.500" y="2.500" width="30" height="35" fill="#f0eef1" />
      <rect x="4" y="4" width="27" height="31.500" fill="#83628f" />
      <path d="M6 12 Q9 9 13 12 M20 11 Q24 8 28 10" stroke="#33243a" strokeWidth="1.600" fill="none" />
      <path d="M5 21 Q14 24 24 19 L24 29 Q12 33 5 21 Z" fill="#f4f0ee" stroke="#4a3450" strokeWidth="0.800" />
      <path d="M10 23 V28 M14 23 V30 M18 22 V30" stroke="#a99aa8" strokeWidth="0.700" />
      <ellipse cx="28" cy="36.500" rx="8" ry="2.600" fill="#777" />
      <circle cx="28" cy="25.500" r="10.500" fill="#e9eaec" />
      <circle cx="28" cy="25.500" r="5" fill="#2b3440" />
      <circle cx="28" cy="25.500" r="2" fill="#9db8cf" />
      <path d="M24 15.500 Q28 13 32 15.500 L31 17 H25 Z" fill="#3674c4" />
      <circle cx="21.500" cy="21" r="1.600" fill="#e8e21f" />
    </Art>
  ),
};

const dockOrder = [
  'thunderbird', 'firefox', 'speaker', 'files', 'notes', 'writer', 'software', 'help', 'amazon', 'clapper',
  'terminal', 'vlc', 'androidstudio', 'pycharmce', 'pycharm', 'clion', 'intellij', 'webstorm', 'chrome', 'vscode',
  'oo', 'picker', 'printer', 'scanner', 'viewer', 'netfolder', 'docview', 'cheese',
];

/* ---------- shared browser chrome ---------- */

const Extensions = () => (
  <>
    {[ExtShare, ExtPuzzle, ExtHand, ExtWand, ExtTrain, ExtArrow, ExtBraces].map((Icon, i) => (
      <IconSlot key={i} $w={32}><Icon /></IconSlot>
    ))}
    <IconSlot $w={13}><VLine $h={16} /></IconSlot>
    <IconSlot $w={32}><Avatar /></IconSlot>
    <IconSlot $w={32}><Kebab /></IconSlot>
  </>
);

const Nav = () => (
  <>
    <IconSlot $w={32}><Back /></IconSlot>
    <IconSlot $w={32}><Forward /></IconSlot>
    <IconSlot $w={32}><Reload /></IconSlot>
  </>
);

const Bookmarks = ({ all }: { all?: boolean }) => (
  <BookmarkBar>
    <Bookmark $w={75}><IconSlot $w={16}><AppsIcon /></IconSlot>Apps</Bookmark>
    <Bookmark $w={98}><IconSlot $w={16}><FirebaseIcon /></IconSlot>Firebase</Bookmark>
    <Bookmark $w={154} $ls={0.25}><IconSlot $w={16}><CodeIcon /></IconSlot>Google Codela…</Bookmark>
    <Bookmark $w={154} $ls={0.35}><IconSlot $w={16}><AndroidIcon /></IconSlot>Android Devel…</Bookmark>
    {all && <Bookmark $w={153} $ls={0.4}><IconSlot $w={16}><Octocat c="#15181b" /></IconSlot>thelonelinux (…</Bookmark>}
    {all && <Bookmark $w={140} $ls={0.3}><IconSlot $w={16}><CodingIcon /></IconSlot>Android - Codi…</Bookmark>}
    <BookmarkEnd>
      <Chevrons />
      <Gap $w={10} />
      <VLine $h={16} />
      <Gap $w={11} />
      <FolderIcon />
      <Other>Other bookmarks</Other>
    </BookmarkEnd>
  </BookmarkBar>
);

const Opt = ({ on, children }: { on?: boolean; children: React.ReactNode }) => (
  <Choice>
    <SmallRadio $on={on} />
    <ChoiceText>{children}</ChoiceText>
  </Choice>
);

const quizItems = [
  { n: '1.', tail: ', which one is most used in the reviews in the', end: <>dataset?</>, opts: ['awesome', 'love', 'hate', 'bad', 'great'], on: 4 },
  { n: '2.', tail: ', which one is least used in the reviews in the', end: <>dataset?</>, opts: ['wow', 'amazing', 'terrible', 'awful', 'love'], on: 0 },
  { n: '3.', tail: ', which one got the most positive weight in the', end: <><em>selected_words_model</em>?</>, opts: [], on: -1 },
];

export default function App() {
  return (
    <Desktop>
      <GlobalStyle />
      <TopBar>
        <BarSide>
          <BarText $w={88} $ls={0.25}>Activities</BarText>
          <ChromeLogo s={15} />
          <Gap $w={7} />
          <BarText $w={116} $ls={0.25}>Google Chrome</BarText>
          <svg width="10" height="5" viewBox="0 0 10 5"><path d="M0 0 H10 L5 5 Z" fill="#cfcbc3" /></svg>
        </BarSide>
        <BarText $w={69}>Mon 21:03</BarText>
        <BarSide $end>
          <svg width="15" height="14" viewBox="0 0 15 14" fill="none" strokeWidth="2">
            <path d="M1 4 Q7.500 -1.500 14 4" stroke="#7d7972" />
            <path d="M3.300 7 Q7.500 3 11.700 7" stroke="#8d8982" />
            <path d="M5 9 Q7.500 7 10 9" stroke="#dcd8cf" />
            <circle cx="7.500" cy="11.800" r="1.900" fill="#dcd8cf" />
          </svg>
          <Gap $w={13} />
          <svg width="16" height="14" viewBox="0 0 16 14" fill="none">
            <path d="M0 4.500 H3 L7 1 V13 L3 9.500 H0 Z" fill="#dcd8cf" />
            <path d="M9 4.500 Q10.300 7 9 9.500 M11 2.800 Q13.500 7 11 11.200 M13 1 Q16.500 7 13 13" stroke="#dcd8cf" strokeWidth="1.500" />
          </svg>
          <Gap $w={14} />
          <svg width="12" height="16" viewBox="0 0 12 16" fill="none" stroke="#dcd8cf" strokeWidth="2">
            <path d="M1 2.500 H3 V1 H9 V2.500 H11 V15 H1 Z" />
            <path d="M3 5.500 H9 M3 8.500 H9 M3 11.500 H9" strokeWidth="1.800" />
          </svg>
          <Gap $w={12} />
          <svg width="10" height="5" viewBox="0 0 10 5"><path d="M0 0 H10 L5 5 Z" fill="#cfcbc3" /></svg>
        </BarSide>
      </TopBar>

      <Workspace>
        <Window>
          <TabStrip>
            <Tab $w={240} $active $line="#808080">
              <IconSlot><Globe /></IconSlot>
              <TabTitle>Machine Learning Founda</TabTitle>
              <IconSlot><Cross /></IconSlot>
            </Tab>
            <NewTab $color="#2d5580"><Plus /></NewTab>
            <WinControls color="#8b8b8b" />
          </TabStrip>
          <Toolbar>
            <Nav />
            <Omnibox>
              <IconSlot $w={34}><Lock /></IconSlot>
              <Url $ls={-0.25}><b>da8y01.github.io</b>/gh-blog/2015/12/26/machine-learning-specialization-1.html</Url>
              <IconSlot $w={32}><ZoomGlass /></IconSlot>
              <IconSlot $w={34}><Star /></IconSlot>
            </Omnibox>
            <Extensions />
          </Toolbar>
          <Bookmarks all />
          <Page>
            <Column>
              <Card>
                <CardBody>
                  <Section $h={71} $top={0}>
                    <FirstBlock>
                      <Choice>
                        <Gap $w={25.5} />
                        <ChoiceText>two. The other two approaches performed about the same.</ChoiceText>
                      </Choice>
                      <Opt>Predicting the simply majority class performed much better than the other<br />two models.</Opt>
                    </FirstBlock>
                  </Section>
                  <Section $h={189} $top={21}>
                    <QNum>9.</QNum>
                    <QMain>
                      <QText>
                        Which of the following ranges contains the <em>‘predicted_sentiment’</em> for the<br />
                        most positive review for <em>‘Baby Trend Diaper Champ’,</em> according to the<br />
                        <em>sentiment_model</em> from the IPython Notebook from lecture?
                      </QText>
                      <Opt>Below 0.7</Opt>
                      <Opt>0.7 to 0.8</Opt>
                      <Opt>0.8 to 0.9</Opt>
                      <Opt on>0.9 to 1.0</Opt>
                    </QMain>
                  </Section>
                  <Section $h={203} $top={21}>
                    <QNum>10.</QNum>
                    <QMain>
                      <QText>
                        Consider the most positive review for <em>‘Baby Trend Diaper Champ’</em><br />
                        according to the <em>sentiment_model</em> from the IPython Notebook from<br />
                        lecture. Which of the following ranges contains the predicted_sentiment<br />
                        for this review, if we use the <em>selected_words_model</em> to analyze it?
                      </QText>
                      <Opt>Below 0.7</Opt>
                      <Opt on>0.7 to 0.8</Opt>
                      <Opt>0.8 to 0.9</Opt>
                      <Opt>0.9 to 1.0</Opt>
                    </QMain>
                  </Section>
                  <Section $h={202} $top={21.4} $thick>
                    <QNum>11.</QNum>
                    <QMain>
                      <QText>
                        Why is the value of the <em>predicted_sentiment</em> for the most positive review<br />
                        found using the <em>sentiment_model</em> much more positive than the value<br />
                        predicted using the <em>selected_words_model</em>?
                      </QText>
                      <Opt>The <em>sentiment_model</em> is just too positive about everything.</Opt>
                      <Opt>The <em>selected_words_model</em> is just too negative about everything.</Opt>
                      <Opt>This review was positive, but used too many of the negative words in<br /><em>selected_words.</em></Opt>
                      <Opt on>None of the <em>selected_words</em> appeared in the text of this review.</Opt>
                    </QMain>
                  </Section>
                  <SubmitRow><Submit>Submit Quiz</Submit></SubmitRow>
                </CardBody>
                <CardFooter>
                  <svg width="12" height="12" viewBox="0 0 12 12" fill="none" stroke="currentColor" strokeWidth="1.100">
                    <path d="M1 5.500 H3.500 L6 2.800 V0.800 Q7.800 0.400 7.800 2.400 L7.300 4.600 H10.800 V7 L10 11 H4 L3.500 10.500 H1 Z" />
                  </svg>
                  <svg width="12" height="12" viewBox="0 0 12 12" fill="none" stroke="currentColor" strokeWidth="1.100">
                    <path d="M11 6.500 H8.500 L7.500 9 V11.200 Q5.500 11.600 5.500 9.600 V7.400 H1.200 V5 L2 1 H8 L8.500 1.500 H11 Z" />
                  </svg>
                  <svg width="13" height="12" viewBox="0 0 13 12" fill="none" stroke="currentColor" strokeWidth="1.100">
                    <path d="M1 0 V12 M1 1.500 Q3.500 0.500 6 1.800 Q9 3 12.300 1.600 V7.400 Q9 8.800 6 7.600 Q3.500 6.500 1 7.500" />
                  </svg>
                </CardFooter>
              </Card>
            </Column>
            <MenuArea>
              <MenuButton><i /><i /><i /></MenuButton>
            </MenuArea>
            <Scroll>
              <ArrowBox><Tri dir="up" c="#404040" /></ArrowBox>
              <Thumb $mt={385} $h={30} />
              <ArrowBox><Tri dir="down" c="#404040" /></ArrowBox>
            </Scroll>
          </Page>
        </Window>

        <Window $focused>
          <TabStrip $focused>
            <Tab $w={161} $active $line="#50505c">
              <IconSlot><Coursera /></IconSlot>
              <TabTitle>Analyzing pro</TabTitle>
              <IconSlot><Cross /></IconSlot>
            </Tab>
            <Tab $w={160} $line="#50505c" $divider>
              <IconSlot><Octocat c="#10161c" /></IconSlot>
              <TabTitle $ls={-0.2}>Machine-Learn</TabTitle>
              <IconSlot><Cross /></IconSlot>
            </Tab>
            <Tab $w={161} $line="#50505c" $divider>
              <IconSlot><YouTube /></IconSlot>
              <TabTitle $ls={-0.25}>TuriCreate | Sp</TabTitle>
              <IconSlot><Cross /></IconSlot>
            </Tab>
            <Tab $w={160} $line="#50505c">
              <IconSlot><StackIcon /></IconSlot>
              <TabTitle $ls={-0.25}>python 2.7 - Gr</TabTitle>
              <IconSlot><Cross /></IconSlot>
            </Tab>
            <NewTab $color="#12305a"><Plus c="#e6f4f8" /></NewTab>
            <WinControls color="#eef0f6" />
          </TabStrip>
          <Toolbar>
            <Nav />
            <Omnibox>
              <IconSlot $w={34}><Lock /></IconSlot>
              <Url $ls={-0.25}><b>coursera.org</b>/learn/ml-foundations/exam/lmpum/an…</Url>
              <IconSlot $w={34}><Star /></IconSlot>
            </Omnibox>
            <Extensions />
          </Toolbar>
          <Bookmarks />
          <Quiz>
            <QuizHeader>
              <svg width="23" height="23" viewBox="0 0 23 23" fill="none" stroke="#4c5366" strokeWidth="1.300">
                <path d="M23 11.500 H1 M12 0.500 L1 11.500 L12 22.500" />
              </svg>
              <QuizTitles>
                <QuizTitle>Analyzing product sentiment</QuizTitle>
                <QuizSub>Graded Quiz • 22 min</QuizSub>
              </QuizTitles>
              <Due><b>Due</b> Dec 23, 1:29 PM IST</Due>
            </QuizHeader>
            <QuizBody>
              <QuizMain>
                <QuizContent>
                  <H1>Analyzing product sentiment</H1>
                  <Total>TOTAL POINTS 11</Total>
                  {quizItems.map(q => (
                    <Question key={q.n}>
                      <QuizNum>{q.n}</QuizNum>
                      <QuizQ>
                        Out of the 11 words in <em>selected_words</em>{q.tail}<br />
                        {q.end}
                        <Answers>
                          {q.opts.map((o, i) => (
                            <Answer key={o}><Radio $on={i === q.on} />{o}</Answer>
                          ))}
                        </Answers>
                      </QuizQ>
                      <Pill>1 point</Pill>
                    </Question>
                  ))}
                </QuizContent>
                <HScroll>
                  <ArrowBox><Tri dir="left" c="#a3a3a3" /></ArrowBox>
                  <ArrowBox><Tri dir="right" c="#8d8d8d" /></ArrowBox>
                </HScroll>
              </QuizMain>
              <Scroll>
                <ArrowBox><Tri dir="up" c="#a3a3a3" /></ArrowBox>
                <Thumb $mt={0} $h={162} />
                <ArrowBox><Tri dir="down" c="#505050" /></ArrowBox>
                <Corner />
              </Scroll>
            </QuizBody>
          </Quiz>
        </Window>
        <Fill />
      </Workspace>

      <Dock>
        {dockOrder.map(name => (
          <DockItem key={name} $active={name === 'chrome'}>
            {dockArt[name]}
            {name === 'pycharm' && <Dots><i /></Dots>}
            {name === 'chrome' && <Dots><i /><i /></Dots>}
          </DockItem>
        ))}
        <AppsGrid>
          {Array.from({ length: 9 }, (_, i) => <i key={i} />)}
        </AppsGrid>
      </Dock>
    </Desktop>
  );
}
